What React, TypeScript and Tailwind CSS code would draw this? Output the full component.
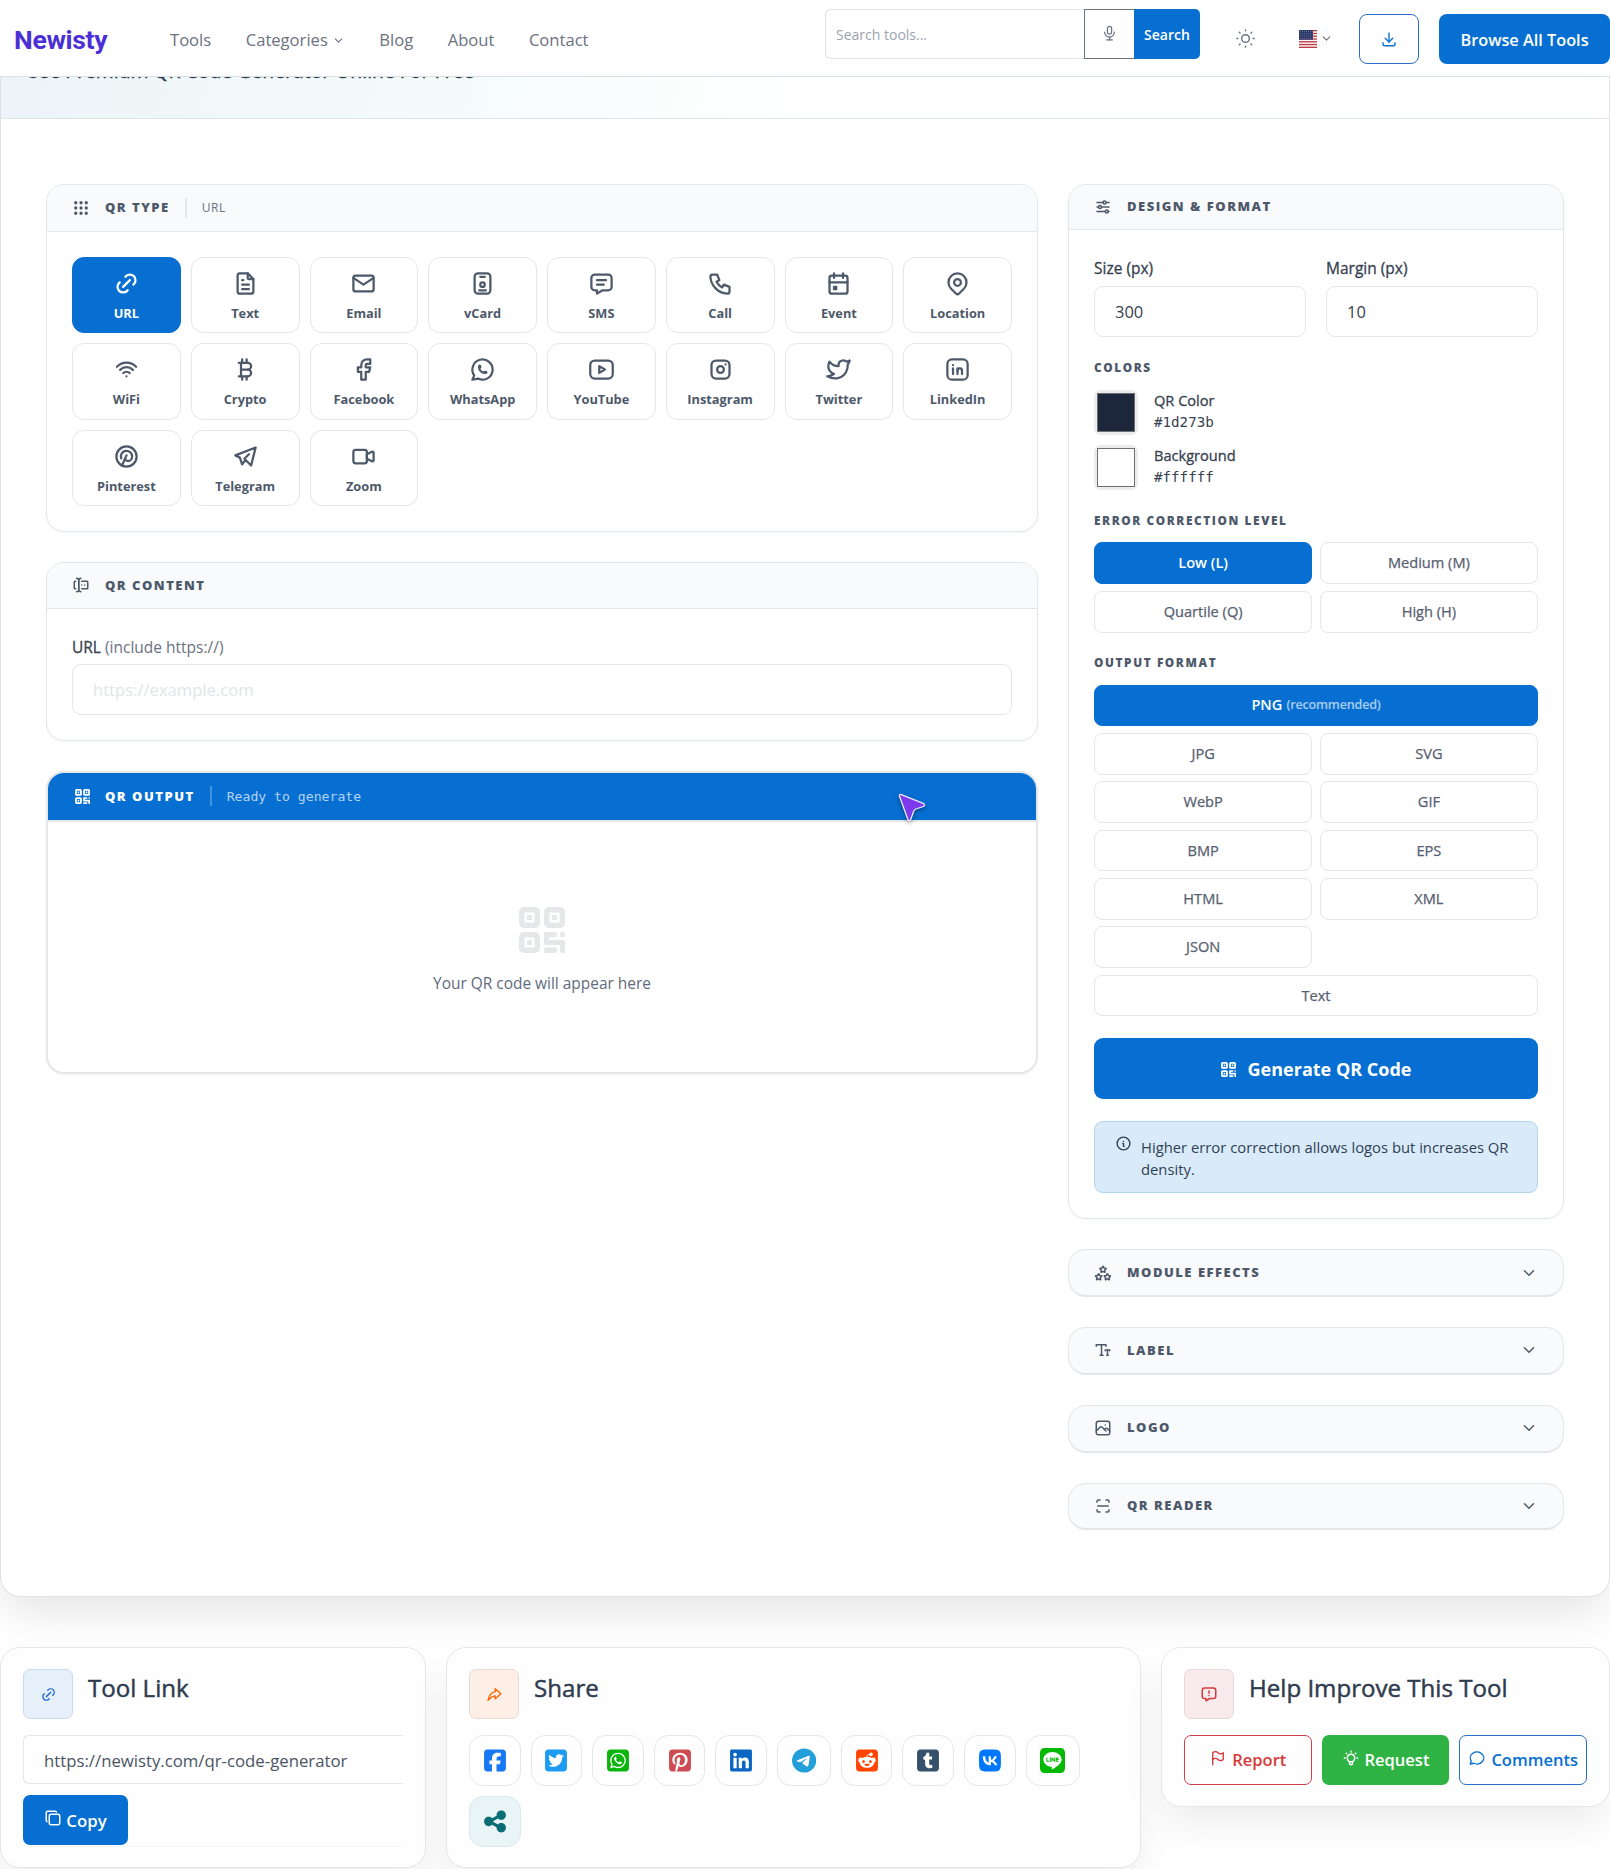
import React, { useState } from "react";
import {
  TbAdjustmentsHorizontal,
  TbBrandFacebook,
  TbBrandInstagram,
  TbBrandLinkedin,
  TbBrandPinterest,
  TbBrandTelegram,
  TbBrandTwitter,
  TbBrandWhatsapp,
  TbBrandYoutube,
  TbBulb,
  TbCalendarEvent,
  TbChevronDown,
  TbCopy,
  TbCurrencyBitcoin,
  TbDownload,
  TbFileText,
  TbFlag,
  TbForms,
  TbGridDots,
  TbIdBadge,
  TbInfoCircle,
  TbLink,
  TbMail,
  TbMapPin,
  TbMessage,
  TbMessageCircle,
  TbMessageReport,
  TbMicrophone,
  TbPhone,
  TbPhoto,
  TbScan,
  TbShare3,
  TbStars,
  TbSun,
  TbTextSize,
  TbVideo,
  TbWifi,
} from "react-icons/tb";
import {
  FaLine,
  FaLinkedin,
  FaShareNodes,
  FaSquareFacebook,
  FaSquarePinterest,
  FaSquareReddit,
  FaSquareTumblr,
  FaSquareTwitter,
  FaSquareWhatsapp,
  FaTelegram,
  FaVk,
} from "react-icons/fa6";

const qrTypes = [
  { label: "URL", icon: TbLink },
  { label: "Text", icon: TbFileText },
  { label: "Email", icon: TbMail },
  { label: "vCard", icon: TbIdBadge },
  { label: "SMS", icon: TbMessage },
  { label: "Call", icon: TbPhone },
  { label: "Event", icon: TbCalendarEvent },
  { label: "Location", icon: TbMapPin },
  { label: "WiFi", icon: TbWifi },
  { label: "Crypto", icon: TbCurrencyBitcoin },
  { label: "Facebook", icon: TbBrandFacebook },
  { label: "WhatsApp", icon: TbBrandWhatsapp },
  { label: "YouTube", icon: TbBrandYoutube },
  { label: "Instagram", icon: TbBrandInstagram },
  { label: "Twitter", icon: TbBrandTwitter },
  { label: "LinkedIn", icon: TbBrandLinkedin },
  { label: "Pinterest", icon: TbBrandPinterest },
  { label: "Telegram", icon: TbBrandTelegram },
  { label: "Zoom", icon: TbVideo },
];

const errorLevels = ["Low (L)", "Medium (M)", "Quartile (Q)", "High (H)"];

const formats = ["PNG", "JPG", "SVG", "WebP", "GIF", "BMP", "EPS", "HTML", "XML", "JSON", "Text"];

const collapsedPanels = [
  { title: "MODULE EFFECTS", icon: TbStars },
  { title: "LABEL", icon: TbTextSize },
  { title: "LOGO", icon: TbPhoto },
  { title: "QR READER", icon: TbScan },
];

const shareLinks = [
  { name: "Facebook", icon: FaSquareFacebook, style: "w-[22px] text-[#1877f2]" },
  { name: "Twitter", icon: FaSquareTwitter, style: "w-[22px] text-[#1d9bf0]" },
  { name: "WhatsApp", icon: FaSquareWhatsapp, style: "w-[22px] text-[#0bb50b]" },
  { name: "Pinterest", icon: FaSquarePinterest, style: "w-[22px] text-[#cf4b53]" },
  { name: "LinkedIn", icon: FaLinkedin, style: "w-[22px] text-[#0a66c2]" },
  { name: "Telegram", icon: FaTelegram, style: "w-[24.300px] text-[#229ed9]" },
  { name: "Reddit", icon: FaSquareReddit, style: "w-[22px] text-[#ff4500]" },
  { name: "Tumblr", icon: FaSquareTumblr, style: "w-[22px] text-[#35506b]" },
  { name: "VK", icon: FaVk, style: "w-[22px] text-[#0077ff]" },
  { name: "LINE", icon: FaLine, style: "w-[25px] text-[#00b900]" },
];

const QrGlyph = ({ className }: { className: string }) => (
  <svg viewBox="0 0 46 46" fill="currentColor" className={className}>
    <path
      fillRule="evenodd"
      d="M5 0h11a5 5 0 0 1 5 5v11a5 5 0 0 1-5 5H5a5 5 0 0 1-5-5V5a5 5 0 0 1 5-5zM5.5 5.5v10h10v-10zM8 8h5v5H8z"
    />
    <path
      fillRule="evenodd"
      d="M30 0h11a5 5 0 0 1 5 5v11a5 5 0 0 1-5 5H30a5 5 0 0 1-5-5V5a5 5 0 0 1 5-5zM30.500 5.500v10h10v-10zM33 8h5v5h-5z"
    />
    <path
      fillRule="evenodd"
      d="M5 25h11a5 5 0 0 1 5 5v11a5 5 0 0 1-5 5H5a5 5 0 0 1-5-5V30a5 5 0 0 1 5-5zM5.500 30.500v10h10v-10zM8 33h5v5H8z"
    />
    <path d="M27 25h9.500a1.500 1.500 0 0 1 1.500 1.500v2a1.500 1.500 0 0 1-1.500 1.500H31.500a1.500 1.500 0 0 0-1.500 1.500V33h14.500a1.500 1.500 0 0 1 1.500 1.500v10a1.500 1.500 0 0 1-3 1.500l-2-1v-7H31.500L30 38h-3a2 2 0 0 1-2-2v-9a2 2 0 0 1 2-2z" />
    <rect x="41" y="25" width="5" height="5" rx="1.500" />
    <rect x="25" y="40.500" width="13" height="5.500" rx="2" />
  </svg>
);

const UsFlag = () => (
  <svg viewBox="0 0 18 18" className="h-[18px] w-[18px]">
    <rect width="18" height="18" fill="#fff" />
    {[0, 2.77, 5.54, 8.31, 11.08, 13.85, 16.62].map((y) => (
      <rect key={y} y={y} width="18" height="1.385" fill="#bd3d44" />
    ))}
    <rect width="14" height="9.700" fill="#2b3a6b" />
    {[1.500, 3.800, 6.100, 8.400].map((y) => (
      <path key={y} d={`M1 ${y}h12.500`} stroke="#fff" strokeWidth="0.600" strokeDasharray="0.600 1.400" opacity="0.700" />
    ))}
  </svg>
);

type PanelHeaderProps = {
  title: string;
  icon: React.ReactNode;
  children?: React.ReactNode;
};

const PanelHeader = ({ title, icon, children }: PanelHeaderProps) => (
  <div className="flex items-center rounded-t-[17px] border-b border-[#e3e6ea] bg-[#f9fafc] px-[25px] text-[#4d596a]">
    {icon}
    <h3 className="ml-[15px] text-[13px] font-extrabold tracking-[1.5px]">{title}</h3>
    {children}
  </div>
);

const SectionLabel = ({ children }: { children: React.ReactNode }) => (
  <h4 className="text-[11.8px] leading-[16px] font-extrabold tracking-[1.6px] text-[#4d596a]">{children}</h4>
);

const App = () => {
  const [qrType, setQrType] = useState("URL");
  const [level, setLevel] = useState("Low (L)");
  const [format, setFormat] = useState("PNG");

  const panel = "rounded-[18px] border border-[#e3e6ea] bg-white shadow-[0_1px_3px_rgba(30,41,59,0.04)]";
  const option = "flex items-center justify-center rounded-[8px] border text-[14.6px]";
  const optionOn = "border-[#066fd1] bg-[#066fd1] font-semibold text-white";
  const optionOff = "border-[#e3e6ea] bg-white text-[#566070] [-webkit-text-stroke:0.25px]";
  const card = "rounded-[20px] border border-[#e6e7e9] bg-[#fefefe] shadow-[0_20px_40px_-4px_rgba(0,0,0,0.08)]";
  const cardTitle = "text-[24.1px] leading-[38px] text-[#2f3b4f] [-webkit-text-stroke:0.45px]";
  const fieldLabel = "text-[15.5px] leading-[22px] [-webkit-text-stroke:0.3px]";
  const field = "mt-[7px] block h-[51px] w-full rounded-[9px] border border-[#e3e6ea] px-5 text-[16.5px] [-webkit-text-stroke:0px]";

  return (
    <div className="relative h-[1869px] w-[1610px] overflow-hidden bg-white font-['Open_Sans',sans-serif] text-[#374151]">
      {/* Top bar */}
      <header className="flex h-[77px] items-center border-b border-[#dfe4e8] bg-white pt-px">
        <a
          href="#"
          className="ml-[14px] w-[156px] pt-[3px] font-['Roboto',sans-serif] text-[26.5px] font-bold tracking-[-0.3px] text-[#4b2fd6]"
        >
          Newisty
        </a>
        <nav className="flex items-center gap-[34.500px] pt-[4px] text-[16.6px] text-[#6b7280]">
          <a href="#">Tools</a>
          <a href="#" className="flex items-center gap-1">
            Categories
            <TbChevronDown className="h-[13px] w-[13px]" />
          </a>
          <a href="#">Blog</a>
          <a href="#">About</a>
          <a href="#">Contact</a>
        </nav>

        <div className="ml-auto flex items-center">
          <div className="mb-[10px] flex h-[50px]">
            <input
              placeholder="Search tools..."
              className="w-[259px] rounded-l-[6px] border border-r-0 border-[#e0e3e7] px-[10px] pt-[2px] text-[14px] placeholder:text-[#9ca3af]"
            />
            <button className="flex w-[50px] items-center justify-center border border-r-0 border-[#6b7280] text-[#6b7280]">
              <TbMicrophone className="h-[17px] w-[17px]" strokeWidth={1.7} />
            </button>
            <button className="w-[66px] rounded-r-[5px] bg-[#066fd1] pt-px text-[14px] font-semibold text-white">
              Search
            </button>
          </div>
          <TbSun className="ml-[34px] h-[23px] w-[23px] text-[#6b7280]" strokeWidth={1.5} />
          <div className="ml-[42px] flex items-center gap-[3px]">
            <UsFlag />
            <TbChevronDown className="h-[13px] w-[13px] text-[#6b7280]" />
          </div>
          <button className="ml-[26px] flex h-[50px] w-[60px] items-center justify-center rounded-[8px] border border-[#2b6fcd] text-[#066fd1]">
            <TbDownload className="h-[18px] w-[18px]" strokeWidth={1.8} />
          </button>
          <button className="ml-5 h-[50px] w-[171px] rounded-[8px] bg-[#066fd1] pt-[3px] text-[16.3px] font-semibold text-white">
            Browse All Tools
          </button>
        </div>
      </header>

      {/* Tool card */}
      <main className="h-[1520px] rounded-b-[20px] border border-t-0 border-[#dfe3e8] bg-white shadow-[0_20px_44px_-4px_rgba(0,0,0,0.1)]">
        <div className="h-[42px] overflow-hidden border-b border-[#dfe4e8] bg-[linear-gradient(100deg,#edf4f8_0%,#f1f9f9_20%,#fafdfd_38%,#ffffff_50%)]">
          <h2 className="-mt-[20px] pl-[25px] text-[19.4px] leading-[28px] text-[#2f3b4f] [-webkit-text-stroke:0.4px]">
            Use Premium QR Code Generator Online For Free
          </h2>
        </div>

        <div className="flex items-start gap-[30px] px-[45px] pt-[65px]">
          <div className="flex w-[992px] flex-col gap-[30px]">
            <section className={panel}>
              <PanelHeader title="QR TYPE" icon={<TbGridDots className="h-[18px] w-[18px]" strokeWidth={2.4} />}>
                <span className="my-[13px] ml-[15px] h-5 w-[2px] bg-[#e3e6ea]" />
                <span className="ml-[15px] text-[12px] tracking-[0.6px] text-[#6b7280]">{qrType}</span>
              </PanelHeader>
              <div className="grid grid-cols-8 gap-[10px] p-[25px]">
                {qrTypes.map(({ label, icon: Icon }) => (
                  <button
                    key={label}
                    onClick={() => setQrType(label)}
                    className={`flex h-[76.3px] flex-col items-center rounded-[12px] border pt-[12px] ${
                      label === qrType ? "border-[#066fd1] bg-[#066fd1] text-white" : "border-[#e3e6ea] text-[#4d596a]"
                    }`}
                  >
                    <Icon className="h-[27px] w-[27px]" />
                    <span className="mt-[6px] text-[12.8px] leading-[20px] font-bold">{label}</span>
                  </button>
                ))}
              </div>
            </section>

            <section className={panel}>
              <PanelHeader title="QR CONTENT" icon={<TbForms className="my-[13.5px] h-[18px] w-[18px]" />} />
              <div className="px-[25px] pt-[27px] pb-[25px]">
                <label className={`block ${fieldLabel}`}>
                  URL <span className="text-[#6b7280] [-webkit-text-stroke:0px]">(include https://)</span>
                </label>
                <input
                  placeholder="https://example.com"
                  className="mt-[6px] block h-[51px] w-full rounded-[9px] border border-[#e3e6ea] px-5 text-[16.6px] placeholder:text-[#e2e5e9]"
                />
              </div>
            </section>

            <section className="rounded-[18px] border-2 border-[#e6e7e9] bg-white shadow-[0_1px_3px_rgba(30,41,59,0.05)]">
              <div className="flex h-[49px] items-center rounded-t-[16px] border-b-2 border-[#e6e7e9] bg-[#066fd1] px-[25px] text-white">
                <span className="flex w-[18px] justify-center">
                  <QrGlyph className="h-[15px] w-[15px]" />
                </span>
                <h3 className="ml-[14px] text-[13px] font-extrabold tracking-[1.5px]">QR OUTPUT</h3>
                <span className="ml-[15px] h-5 w-[2px] bg-white/25" />
                <span className="ml-[15px] font-['DejaVu_Sans_Mono',monospace] text-[13.15px] text-white/70">
                  Ready to generate
                </span>
              </div>
              <div className="flex h-[250px] flex-col items-center pt-[85px]">
                <QrGlyph className="h-[46px] w-[46px] text-[#e6e7e9]" />
                <p className="mt-[19px] text-[15.45px] leading-[22px] text-[#616b7c]">Your QR code will appear here</p>
              </div>
            </section>
          </div>

          <div className="flex w-[496px] flex-col gap-[30px]">
            <section className={panel}>
              <PanelHeader
                title="DESIGN & FORMAT"
                icon={<TbAdjustmentsHorizontal className="my-[13px] h-[18px] w-[18px]" />}
              />
              <div className="px-[25px] pt-[27px] pb-[25px]">
                <div className="grid grid-cols-2 gap-5">
                  <label className={fieldLabel}>
                    Size (px)
                    <input defaultValue="300" className={field} />
                  </label>
                  <label className={fieldLabel}>
                    Margin (px)
                    <input defaultValue="10" className={field} />
                  </label>
                </div>

                <div className="mt-[22px]">
                  <SectionLabel>COLORS</SectionLabel>
                </div>
                <div className="mt-[15px] flex flex-col gap-[10px]">
                  <div className="flex h-[45px] items-center">
                    <span className="h-[45px] w-[44px] rounded-[7px] bg-[#ececee] p-[3px]">
                      <span className="block h-[39px] w-[38px] border border-[#6f7073] bg-[#1d273b]" />
                    </span>
                    <span className="ml-4 pb-[3px] leading-[22px]">
                      <span className="block text-[14.6px] [-webkit-text-stroke:0.3px]">QR Color</span>
                      <span className="block font-['DejaVu_Sans_Mono',monospace] text-[14.2px]">#1d273b</span>
                    </span>
                  </div>
                  <div className="flex h-[45px] items-center">
                    <span className="h-[45px] w-[44px] rounded-[7px] bg-[#ececee] p-[3px]">
                      <span className="block h-[39px] w-[38px] border border-[#6f7073] bg-white" />
                    </span>
                    <span className="ml-4 pb-[3px] leading-[22px]">
                      <span className="block text-[14.6px] [-webkit-text-stroke:0.3px]">Background</span>
                      <span className="block font-['DejaVu_Sans_Mono',monospace] text-[14.2px]">#ffffff</span>
                    </span>
                  </div>
                </div>

                <div className="mt-[22px]">
                  <SectionLabel>ERROR CORRECTION LEVEL</SectionLabel>
                </div>
                <div className="mt-[14px] grid grid-cols-2 gap-[7.5px]">
                  {errorLevels.map((item) => (
                    <button
                      key={item}
                      onClick={() => setLevel(item)}
                      className={`h-[41.5px] ${option} ${item === level ? optionOn : optionOff}`}
                    >
                      {item}
                    </button>
                  ))}
                </div>

                <div className="mt-[21px]">
                  <SectionLabel>OUTPUT FORMAT</SectionLabel>
                </div>
                <div className="mt-[15px] grid grid-cols-2 gap-x-[7.5px] gap-y-[6.7px]">
                  {formats.map((item) => (
                    <button
                      key={item}
                      onClick={() => setFormat(item)}
                      className={`h-[41.7px] ${option} ${item === format ? optionOn : optionOff} ${
                        item === "PNG" || item === "Text" ? "col-span-2" : ""
                      }`}
                    >
                      {item}
                      {item === "PNG" && <span className="ml-1 text-[12.6px] tracking-[-0.2px] text-white/65">(recommended)</span>}
                    </button>
                  ))}
                </div>

                <button className="mt-[22px] flex h-[61px] w-full items-center justify-center rounded-[9px] bg-[#066fd1] pt-px text-[18px] font-bold text-white">
                  <QrGlyph className="mr-[12px] h-[15px] w-[15px]" />
                  Generate QR Code
                </button>

                <div className="mt-[22px] flex h-[72px] rounded-[9px] border border-[#b3d4f1] bg-[#d9eaf8] pt-[14px] pr-5 pl-[20px] text-[#2f3f57]">
                  <TbInfoCircle className="mt-[-1px] h-[17px] w-[17px] shrink-0" />
                  <p className="ml-[9px] text-[14.8px] leading-[22px]">
                    Higher error correction allows logos but increases QR density.
                  </p>
                </div>
              </div>
            </section>

            {collapsedPanels.map(({ title, icon: Icon }) => (
              <section
                key={title}
                className="flex h-[47.700px] items-center rounded-[18px] border border-b-2 border-[#e3e6ea] bg-[#f9fafc] px-[25px] text-[#4d596a]"
              >
                <Icon className="h-[18px] w-[18px]" />
                <h3 className="ml-[15px] text-[13px] font-extrabold tracking-[1.5px]">{title}</h3>
                <TbChevronDown className="ml-auto h-[18px] w-[18px]" />
              </section>
            ))}
          </div>
        </div>
      </main>

      {/* Footer cards */}
      <div className="mt-[50px] flex items-start">
        <section className={`h-[221px] w-[426px] pt-[21px] pl-[22px] ${card}`}>
          <div className="flex gap-[15px]">
            <span className="flex h-[50px] w-[50px] items-center justify-center rounded-[7px] border border-[#cddcea] bg-[#e6f0fa] text-[#2b6fd6]">
              <TbLink className="h-[17px] w-[17px]" />
            </span>
            <h3 className={cardTitle}>Tool Link</h3>
          </div>
          <div className="mt-4 h-[112px] w-[380px] border-b border-[#f3f4f5]">
            <input
              defaultValue="https://newisty.com/qr-code-generator"
              className="block h-[49px] w-full rounded-l-[6px] border border-r-0 border-[#e3e6ea] px-[20px] pt-[2px] text-[16.75px] text-[#4b5563]"
            />
            <button className="mt-[11px] flex h-[50px] w-[105px] items-center justify-center rounded-[7px] bg-[#066fd1] text-[16.8px] font-semibold text-white">
              <TbCopy className="mr-[4px] mb-[4px] h-[18px] w-[18px]" />
              <span className="pt-[2px]">Copy</span>
            </button>
          </div>
        </section>

        <section className={`ml-5 h-[221px] w-[695px] pt-[21px] pl-[22px] ${card}`}>
          <div className="flex gap-[15px]">
            <span className="flex h-[50px] w-[50px] items-center justify-center rounded-[7px] border border-[#e6dcd6] bg-[#fdeee6] text-[#f76707]">
              <TbShare3 className="h-[17px] w-[17px]" />
            </span>
            <h3 className={cardTitle}>Share</h3>
          </div>
          <div className="mt-4 flex w-[630px] flex-wrap gap-x-[10px] gap-y-[10.5px]">
            {shareLinks.map(({ name, icon: Icon, style }) => (
              <a
                key={name}
                href="#"
                aria-label={name}
                className="flex h-[50.5px] items-center rounded-[14px] border border-[#e6e7e9] px-[13.8px]"
              >
                <Icon className={`h-[25px] ${style}`} />
              </a>
            ))}
            <a
              href="#"
              aria-label="More"
              className="flex h-[50.5px] items-center rounded-[14px] border border-[#dbe8ea] bg-[#e8f4f5] px-[13.8px] text-[#0a6c74]"
            >
              <FaShareNodes className="h-[25px] w-[22px]" />
            </a>
          </div>
        </section>

        <section className={`ml-5 h-[160px] w-[449px] px-[22px] pt-[21px] ${card}`}>
          <div className="flex gap-[15px]">
            <span className="flex h-[50px] w-[50px] items-center justify-center rounded-[7px] border border-[#e3d8da] bg-[#f9ebed] text-[#d63939]">
              <TbMessageReport className="h-[18px] w-[18px]" />
            </span>
            <h3 className={cardTitle}>Help Improve This Tool</h3>
          </div>
          <div className="mt-4 grid grid-cols-3 gap-[10px] text-[16.5px] font-semibold">
            <button className="flex h-[50px] items-center justify-center gap-[5px] rounded-[7px] border border-[#cf3f45] text-[#d63939]">
              <TbFlag className="mb-[4px] h-[18px] w-[18px]" strokeWidth={1.8} />
              <span className="pt-px">Report</span>
            </button>
            <button className="flex h-[50px] items-center justify-center gap-[5px] rounded-[7px] bg-[#2fb344] text-white">
              <TbBulb className="mb-[4px] h-[18px] w-[18px]" />
              <span className="pt-px">Request</span>
            </button>
            <button className="flex h-[50px] items-center justify-center gap-[5px] rounded-[7px] border border-[#2b6fcd] text-[#066fd1]">
              <TbMessageCircle className="mb-[4px] h-[18px] w-[18px]" strokeWidth={1.8} />
              <span className="pt-px">Comments</span>
            </button>
          </div>
        </section>
      </div>

      {/* Pointer */}
      <svg
        viewBox="0 0 34 34"
        className="absolute top-[790px] left-[894px] h-[34px] w-[34px] drop-shadow-[0_2px_2px_rgba(0,0,0,0.35)]"
      >
        <path
          d="M5.500 6.200C5 4.800 6 4.200 7.200 4.600L29.300 13.300C31 14 31 15.900 29.300 16.500L22 19C20.800 19.500 20.200 20 19.700 21.200L16.700 29.500C16 31 14.500 31 13.900 29.500Z"
          fill="#7c3aed"
          stroke="#efe9fb"
          strokeWidth="1.300"
          strokeLinejoin="round"
        />
      </svg>
    </div>
  );
};

export default App;
